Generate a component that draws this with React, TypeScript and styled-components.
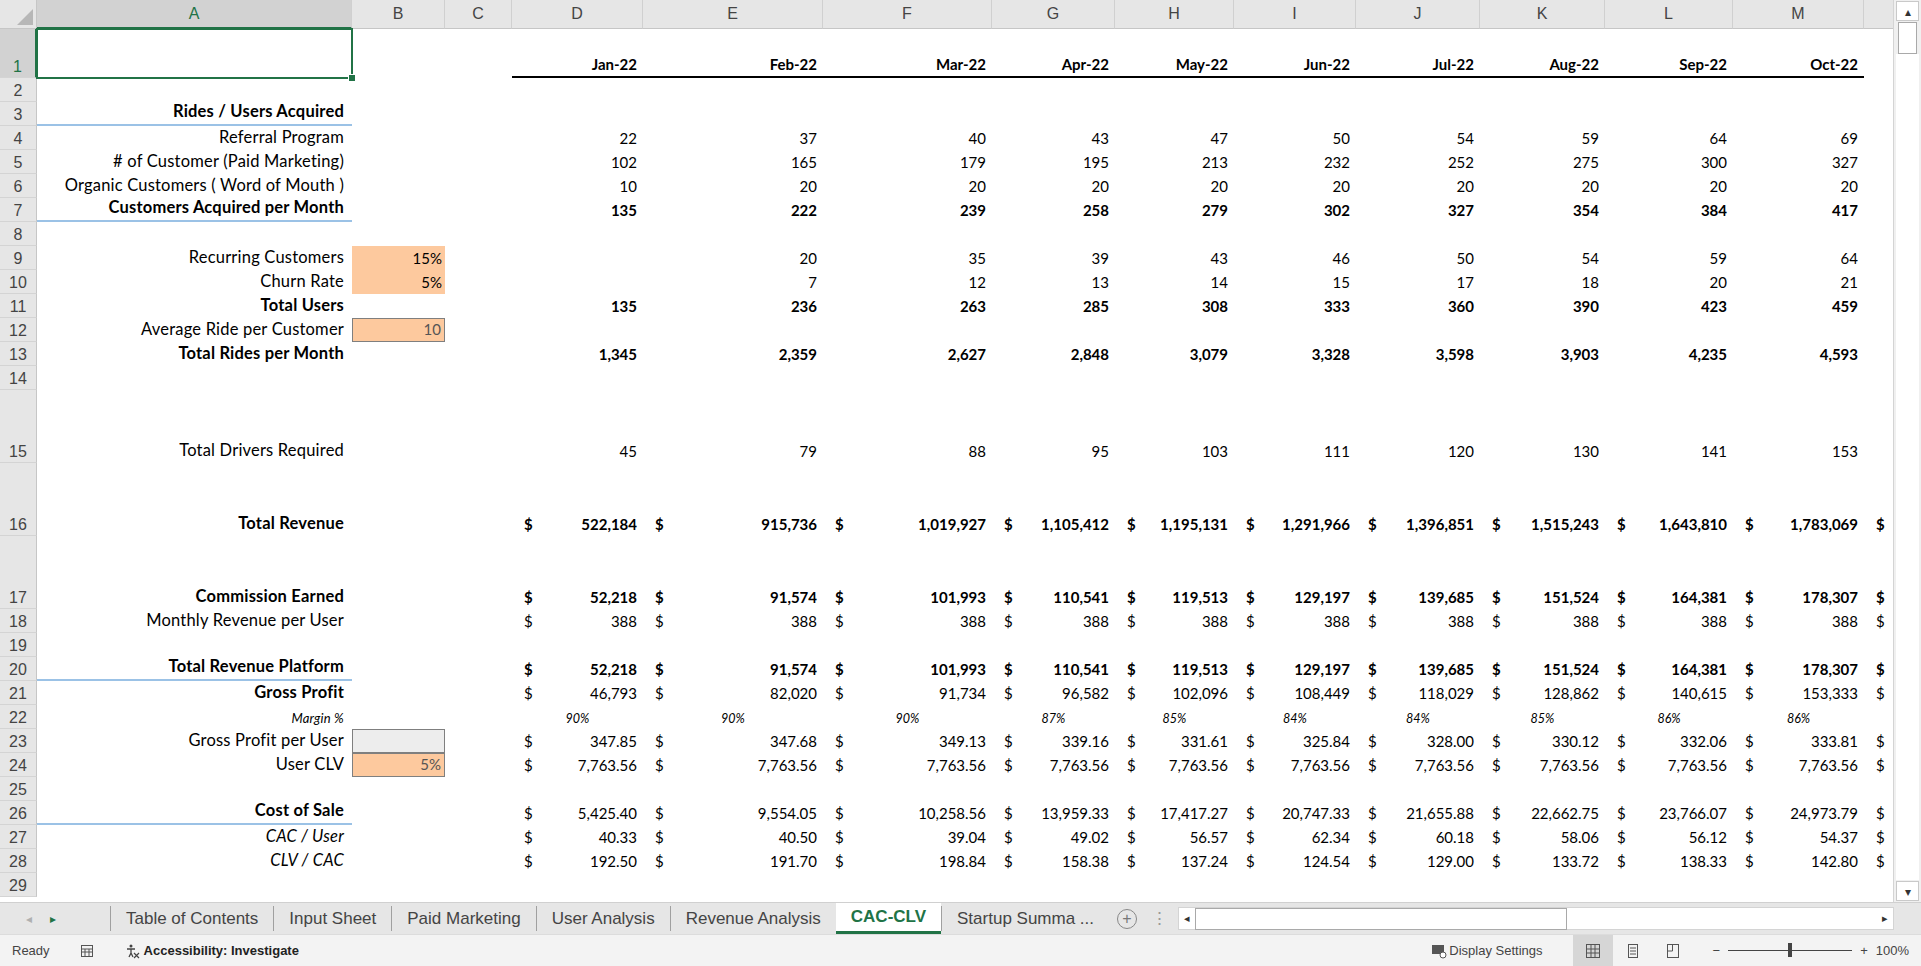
import React from 'react'
import styled, { createGlobalStyle, css } from 'styled-components'

const GlobalStyle = createGlobalStyle`
  html, body { margin: 0; padding: 0; background: #fff; }
  body { font-family: Lato, "Liberation Sans", sans-serif; overflow: hidden; }
`

const green = '#217346'
const colWidths = [37, 315, 93, 67, 131, 180, 169, 123, 119, 122, 124, 125, 128, 131, 30]
const colLetters = ['A', 'B', 'C', 'D', 'E', 'F', 'G', 'H', 'I', 'J', 'K', 'L', 'M', '']

type RowKind = 'num' | 'acct' | 'pct' | 'head' | 'none'
type Row = {
  n: number
  h: number
  label?: string
  labelBold?: boolean
  labelItalic?: boolean
  labelSmall?: boolean
  labelLine?: boolean
  b?: string
  bKind?: 'orange' | 'orangeBox' | 'grey'
  kind: RowKind
  bold?: boolean
  values?: string[]
}

const months = ['Jan-22', 'Feb-22', 'Mar-22', 'Apr-22', 'May-22', 'Jun-22', 'Jul-22', 'Aug-22', 'Sep-22', 'Oct-22']
const sp = (s: string) => s.split(' ')

const rows: Row[] = [
  { n: 1, h: 49, kind: 'head', values: months },
  { n: 2, h: 24, kind: 'none' },
  { n: 3, h: 24, label: 'Rides / Users Acquired', labelBold: true, labelLine: true, kind: 'none' },
  { n: 4, h: 24, label: 'Referral Program', kind: 'num', values: sp('22 37 40 43 47 50 54 59 64 69') },
  { n: 5, h: 24, label: '# of Customer (Paid Marketing)', kind: 'num', values: sp('102 165 179 195 213 232 252 275 300 327') },
  { n: 6, h: 24, label: 'Organic Customers  ( Word of Mouth )', kind: 'num', values: sp('10 20 20 20 20 20 20 20 20 20') },
  { n: 7, h: 24, label: 'Customers Acquired per Month', labelBold: true, labelLine: true, kind: 'num', bold: true, values: sp('135 222 239 258 279 302 327 354 384 417') },
  { n: 8, h: 24, kind: 'none' },
  { n: 9, h: 24, label: 'Recurring Customers', b: '15%', bKind: 'orange', kind: 'num', values: sp('_ 20 35 39 43 46 50 54 59 64') },
  { n: 10, h: 24, label: 'Churn Rate', b: '5%', bKind: 'orange', kind: 'num', values: sp('_ 7 12 13 14 15 17 18 20 21') },
  { n: 11, h: 24, label: 'Total Users', labelBold: true, kind: 'num', bold: true, values: sp('135 236 263 285 308 333 360 390 423 459') },
  { n: 12, h: 24, label: 'Average Ride per Customer', b: '10', bKind: 'orangeBox', kind: 'none' },
  { n: 13, h: 24, label: 'Total Rides per Month', labelBold: true, kind: 'num', bold: true, values: sp('1,345 2,359 2,627 2,848 3,079 3,328 3,598 3,903 4,235 4,593') },
  { n: 14, h: 24, kind: 'none' },
  { n: 15, h: 73, label: 'Total Drivers Required', kind: 'num', values: sp('45 79 88 95 103 111 120 130 141 153') },
  { n: 16, h: 73, label: 'Total Revenue', labelBold: true, kind: 'acct', bold: true, values: sp('522,184 915,736 1,019,927 1,105,412 1,195,131 1,291,966 1,396,851 1,515,243 1,643,810 1,783,069') },
  { n: 17, h: 73, label: 'Commission Earned', labelBold: true, kind: 'acct', bold: true, values: sp('52,218 91,574 101,993 110,541 119,513 129,197 139,685 151,524 164,381 178,307') },
  { n: 18, h: 24, label: 'Monthly Revenue per User', kind: 'acct', values: sp('388 388 388 388 388 388 388 388 388 388') },
  { n: 19, h: 24, kind: 'none' },
  { n: 20, h: 24, label: 'Total Revenue Platform', labelBold: true, labelLine: true, kind: 'acct', bold: true, values: sp('52,218 91,574 101,993 110,541 119,513 129,197 139,685 151,524 164,381 178,307') },
  { n: 21, h: 24, label: 'Gross Profit', labelBold: true, kind: 'acct', values: sp('46,793 82,020 91,734 96,582 102,096 108,449 118,029 128,862 140,615 153,333') },
  { n: 22, h: 24, label: 'Margin %', labelItalic: true, labelSmall: true, kind: 'pct', values: sp('90% 90% 90% 87% 85% 84% 84% 85% 86% 86%') },
  { n: 23, h: 24, label: 'Gross Profit per User', b: '', bKind: 'grey', kind: 'acct', values: sp('347.85 347.68 349.13 339.16 331.61 325.84 328.00 330.12 332.06 333.81') },
  { n: 24, h: 24, label: 'User CLV', b: '5%', bKind: 'orangeBox', kind: 'acct', values: sp('7,763.56 7,763.56 7,763.56 7,763.56 7,763.56 7,763.56 7,763.56 7,763.56 7,763.56 7,763.56') },
  { n: 25, h: 24, kind: 'none' },
  { n: 26, h: 24, label: 'Cost of Sale', labelBold: true, labelLine: true, kind: 'acct', values: sp('5,425.40 9,554.05 10,258.56 13,959.33 17,417.27 20,747.33 21,655.88 22,662.75 23,766.07 24,973.79') },
  { n: 27, h: 24, label: 'CAC / User', labelItalic: true, kind: 'acct', values: sp('40.33 40.50 39.04 49.02 56.57 62.34 60.18 58.06 56.12 54.37') },
  { n: 28, h: 24, label: 'CLV / CAC', labelItalic: true, kind: 'acct', values: sp('192.50 191.70 198.84 158.38 137.24 124.54 129.00 133.72 138.33 142.80') },
  { n: 29, h: 24, kind: 'none' },
]

export default function App() {
  return (
    <>
      <GlobalStyle />
      <Window>
        <SheetArea>
          <Grid>
            <Sheet $rows={rows.map((r) => r.h)}>
              <Corner><CornerTri /></Corner>
              {colLetters.map((l, i) => (
                <ColHeader key={i} $active={i === 0}>{l}</ColHeader>
              ))}
              {rows.map((r) => (
                <React.Fragment key={r.n}>
                  <RowHeader $active={r.n === 1}>{r.n}</RowHeader>
                  <Cell $line={r.labelLine} $bold={r.labelBold} $italic={r.labelItalic} $small={r.labelSmall}>
                    {r.n === 1 ? <Selection><Handle /></Selection> : r.label}
                  </Cell>
                  <BCell>{r.bKind && <InputBox $kind={r.bKind}>{r.b}</InputBox>}</BCell>
                  <Cell />
                  {Array.from({ length: 10 }).map((_, i) => {
                    const v = r.values?.[i]
                    if (r.kind === 'head') return <HeadCell key={i}>{v}</HeadCell>
                    if (r.kind === 'acct')
                      return (
                        <AcctCell key={i} $bold={r.bold}>
                          <span>$</span>
                          <span>{v}</span>
                        </AcctCell>
                      )
                    if (r.kind === 'pct') return <PctCell key={i}>{v}</PctCell>
                    return <NumCell key={i} $bold={r.bold}>{v && v !== '_' ? v : ''}</NumCell>
                  })}
                  <AcctCell $bold={r.bold}>{r.kind === 'acct' && <span>$</span>}</AcctCell>
                </React.Fragment>
              ))}
            </Sheet>
          </Grid>
          <VScroll>
            <ScrollBtn>▴</ScrollBtn>
            <Thumb />
            <Track />
            <ScrollBtn>▾</ScrollBtn>
          </VScroll>
        </SheetArea>
        <TabBar>
          <TabNav>
            <NavArrow $dim>◂</NavArrow>
            <NavArrow>▸</NavArrow>
          </TabNav>
          {['Table of Contents', 'Input Sheet', 'Paid Marketing', 'User Analysis', 'Revenue Analysis', 'CAC-CLV', 'Startup Summa ...'].map((t) => (
            <Tab key={t} $active={t === 'CAC-CLV'}>{t}</Tab>
          ))}
          <AddTab>+</AddTab>
          <Dots>⋮</Dots>
          <HScroll>
            <HBtn>◂</HBtn>
            <HThumb />
            <HTrack />
            <HBtn>▸</HBtn>
          </HScroll>
        </TabBar>
        <StatusBar>
          <StatusLeft>
            <span>Ready</span>
            <svg width="14" height="14" viewBox="0 0 14 14"><rect x="1.5" y="1.5" width="11" height="11" fill="none" stroke="#555" /><path d="M1.5 5h11M1.5 8h11M5 5v7.5M9 5v7.5" stroke="#555" /></svg>
            <Access>
              <svg width="16" height="16" viewBox="0 0 16 16"><circle cx="7" cy="3" r="1.5" fill="#444" /><path d="M3 6h8M7 6v4l-2 4M7 10l2 4" stroke="#444" fill="none" strokeWidth="1.3" /><path d="M10 10l5 5M15 10l-5 5" stroke="#444" strokeWidth="1.2" /></svg>
              <b>Accessibility: Investigate</b>
            </Access>
          </StatusLeft>
          <StatusRight>
            <Display>
              <svg width="16" height="16" viewBox="0 0 16 16"><rect x="1" y="2" width="12" height="9" fill="#555" /><circle cx="12" cy="12" r="3" fill="#fff" stroke="#555" /></svg>
              Display Settings
            </Display>
            <ViewBtn $active>
              <svg width="16" height="16" viewBox="0 0 16 16"><rect x="1.5" y="1.5" width="13" height="13" fill="none" stroke="#555" /><path d="M1.5 6h13M1.5 10h13M6 1.5v13M10 1.5v13" stroke="#555" /></svg>
            </ViewBtn>
            <ViewBtn>
              <svg width="16" height="16" viewBox="0 0 16 16"><rect x="3.5" y="1.5" width="9" height="13" fill="none" stroke="#555" /><path d="M5 5h6M5 8h6M5 11h6" stroke="#555" /></svg>
            </ViewBtn>
            <ViewBtn>
              <svg width="16" height="16" viewBox="0 0 16 16"><rect x="2.5" y="1.5" width="11" height="13" fill="none" stroke="#555" /><path d="M2.5 8h5V1.5" stroke="#555" fill="none" /></svg>
            </ViewBtn>
            <Zoom>
              <span>−</span>
              <Slider><Knob /></Slider>
              <span>+</span>
              <span>100%</span>
            </Zoom>
          </StatusRight>
        </StatusBar>
      </Window>
    </>
  )
}

const Window = styled.div`
  width: 1921px;
  height: 966px;
  display: flex;
  flex-direction: column;
  background: #fff;
  color: #000;
`
const SheetArea = styled.div`
  height: 904px;
  display: flex;
  overflow: hidden;
`
const Grid = styled.div`
  flex: 1;
  overflow: hidden;
`
const Sheet = styled.div<{ $rows: number[] }>`
  display: grid;
  grid-template-columns: ${colWidths.map((w) => `${w}px`).join(' ')};
  grid-template-rows: 29px ${(p) => p.$rows.map((h) => `${h}px`).join(' ')};
  font-size: 15px;
`
const headerBase = css`
  background: #e6e6e6;
  color: #444;
  display: flex;
  align-items: center;
  justify-content: center;
  font-family: "Liberation Sans", Arial, sans-serif;
  font-size: 16px;
`
const Corner = styled.div`
  ${headerBase};
  border-right: 1px solid #c6c6c6;
  border-bottom: 1px solid #c6c6c6;
  position: relative;
`
const CornerTri = styled.div`
  position: absolute;
  right: 3px;
  bottom: 3px;
  border-left: 16px solid transparent;
  border-bottom: 16px solid #b7b7b7;
`
const ColHeader = styled.div<{ $active?: boolean }>`
  ${headerBase};
  border-right: 1px solid #d0d0d0;
  border-bottom: 1px solid #c6c6c6;
  ${(p) => p.$active && css`
    background: #d2d2d2;
    color: ${green};
    border-bottom: 2px solid ${green};
  `}
`
const RowHeader = styled.div<{ $active?: boolean }>`
  ${headerBase};
  align-items: flex-end;
  padding-bottom: 1px;
  border-right: 1px solid #c6c6c6;
  border-bottom: 1px solid #d4d4d4;
  ${(p) => p.$active && css`
    background: #d2d2d2;
    color: ${green};
    border-right: 2px solid ${green};
  `}
`
const Cell = styled.div<{ $line?: boolean; $bold?: boolean; $italic?: boolean; $small?: boolean }>`
  position: relative;
  display: flex;
  align-items: flex-end;
  justify-content: flex-end;
  padding: 0 8px 3px 0;
  white-space: nowrap;
  font-weight: ${(p) => (p.$bold ? 700 : 400)};
  font-style: ${(p) => (p.$italic ? 'italic' : 'normal')};
  font-size: ${(p) => (p.$small ? '13px' : '16.5px')};
  letter-spacing: 0.2px;
  border-bottom: ${(p) => (p.$line ? '2px solid #9bc2e6' : 'none')};
`
const Selection = styled.div`
  position: absolute;
  inset: -1px;
  border: 2px solid ${green};
`
const Handle = styled.div`
  position: absolute;
  right: -5px;
  bottom: -5px;
  width: 6px;
  height: 6px;
  background: ${green};
  border: 1px solid #fff;
`
const BCell = styled.div`
  display: flex;
  align-items: stretch;
`
const InputBox = styled.div<{ $kind: 'orange' | 'orangeBox' | 'grey' }>`
  flex: 1;
  display: flex;
  align-items: flex-end;
  justify-content: flex-end;
  padding: 0 3px 3px 0;
  font-size: 15px;
  background: ${(p) => (p.$kind === 'grey' ? '#ededed' : '#fdc99e')};
  color: ${(p) => (p.$kind === 'orange' ? '#000' : '#555')};
  border: ${(p) => (p.$kind === 'orange' ? 'none' : '1px solid #7f7f7f')};
`
const HeadCell = styled.div`
  display: flex;
  align-items: flex-end;
  justify-content: flex-end;
  padding: 0 6px 3px 0;
  font-weight: 700;
  border-bottom: 2px solid #000;
`
const NumCell = styled.div<{ $bold?: boolean }>`
  display: flex;
  align-items: flex-end;
  justify-content: flex-end;
  padding: 0 6px 3px 0;
  font-weight: ${(p) => (p.$bold ? 700 : 400)};
`
const AcctCell = styled.div<{ $bold?: boolean }>`
  display: flex;
  align-items: flex-end;
  justify-content: space-between;
  padding: 0 6px 3px 12px;
  font-weight: ${(p) => (p.$bold ? 700 : 400)};
  white-space: nowrap;
`
const PctCell = styled.div`
  display: flex;
  align-items: flex-end;
  justify-content: center;
  padding-bottom: 3px;
  font-style: italic;
  font-size: 12.5px;
`
const VScroll = styled.div`
  width: 27px;
  background: #f0f0f0;
  border-left: 1px solid #d4d4d4;
  display: flex;
  flex-direction: column;
`
const ScrollBtn = styled.div`
  height: 18px;
  display: flex;
  align-items: center;
  justify-content: center;
  font-size: 12px;
  color: #333;
  background: #fff;
  border: 1px solid #c9c9c9;
  margin: 1px 2px;
`
const Thumb = styled.div`
  height: 30px;
  margin: 0 4px;
  background: #fff;
  border: 1px solid #a9a9a9;
`
const Track = styled.div`
  flex: 1;
  background: #fff;
  margin: 0 2px;
`
const TabBar = styled.div`
  height: 31px;
  display: flex;
  align-items: stretch;
  background: #e6e6e6;
  border-top: 1px solid #d0d0d0;
  font-family: "Liberation Sans", Arial, sans-serif;
  font-size: 17px;
`
const TabNav = styled.div`
  width: 110px;
  display: flex;
  align-items: center;
  gap: 18px;
  padding-left: 26px;
  box-sizing: border-box;
`
const NavArrow = styled.span<{ $dim?: boolean }>`
  color: ${(p) => (p.$dim ? '#b0b0b0' : green)};
  font-size: 12px;
`
const Tab = styled.div<{ $active?: boolean }>`
  display: flex;
  align-items: center;
  padding: 0 15px;
  color: #444;
  border-left: 1px solid #a0a0a0;
  margin: 3px 0;
  ${(p) => p.$active && css`
    margin: 0;
    background: #fff;
    color: ${green};
    font-weight: 700;
    border-bottom: 3px solid ${green};
    border-left: none;
  `}
`
const AddTab = styled.div`
  width: 18px;
  height: 18px;
  align-self: center;
  border: 1px solid #888;
  border-radius: 50%;
  margin-left: 8px;
  display: flex;
  align-items: center;
  justify-content: center;
  color: #777;
  font-size: 16px;
`
const Dots = styled.div`
  display: flex;
  align-items: center;
  color: #999;
  margin: 0 10px 0 14px;
`
const HScroll = styled.div`
  flex: 1;
  display: flex;
  align-items: center;
  margin: 4px 27px 4px 0;
  background: #fff;
  border: 1px solid #d4d4d4;
`
const HBtn = styled.div`
  width: 16px;
  font-size: 11px;
  color: #333;
  text-align: center;
`
const HThumb = styled.div`
  width: 370px;
  height: 20px;
  border: 1px solid #a9a9a9;
`
const HTrack = styled.div`
  flex: 1;
`
const StatusBar = styled.div`
  height: 31px;
  display: flex;
  align-items: center;
  justify-content: space-between;
  background: #f3f3f3;
  border-top: 1px solid #dcdcdc;
  font-family: "Liberation Sans", Arial, sans-serif;
  font-size: 13px;
  color: #444;
  padding: 0 12px;
`
const StatusLeft = styled.div`
  display: flex;
  align-items: center;
  gap: 30px;
`
const Access = styled.div`
  display: flex;
  align-items: center;
  gap: 4px;
  color: #222;
`
const StatusRight = styled.div`
  display: flex;
  align-items: center;
  height: 100%;
`
const Display = styled.div`
  display: flex;
  align-items: center;
  gap: 2px;
  margin-right: 30px;
`
const ViewBtn = styled.div<{ $active?: boolean }>`
  width: 40px;
  height: 100%;
  display: flex;
  align-items: center;
  justify-content: center;
  background: ${(p) => (p.$active ? '#d6d6d6' : 'transparent')};
`
const Zoom = styled.div`
  display: flex;
  align-items: center;
  gap: 8px;
  margin-left: 20px;
`
const Slider = styled.div`
  width: 124px;
  height: 1px;
  background: #444;
  position: relative;
`
const Knob = styled.div`
  position: absolute;
  left: 60px;
  top: -7px;
  width: 4px;
  height: 14px;
  background: #444;
`
